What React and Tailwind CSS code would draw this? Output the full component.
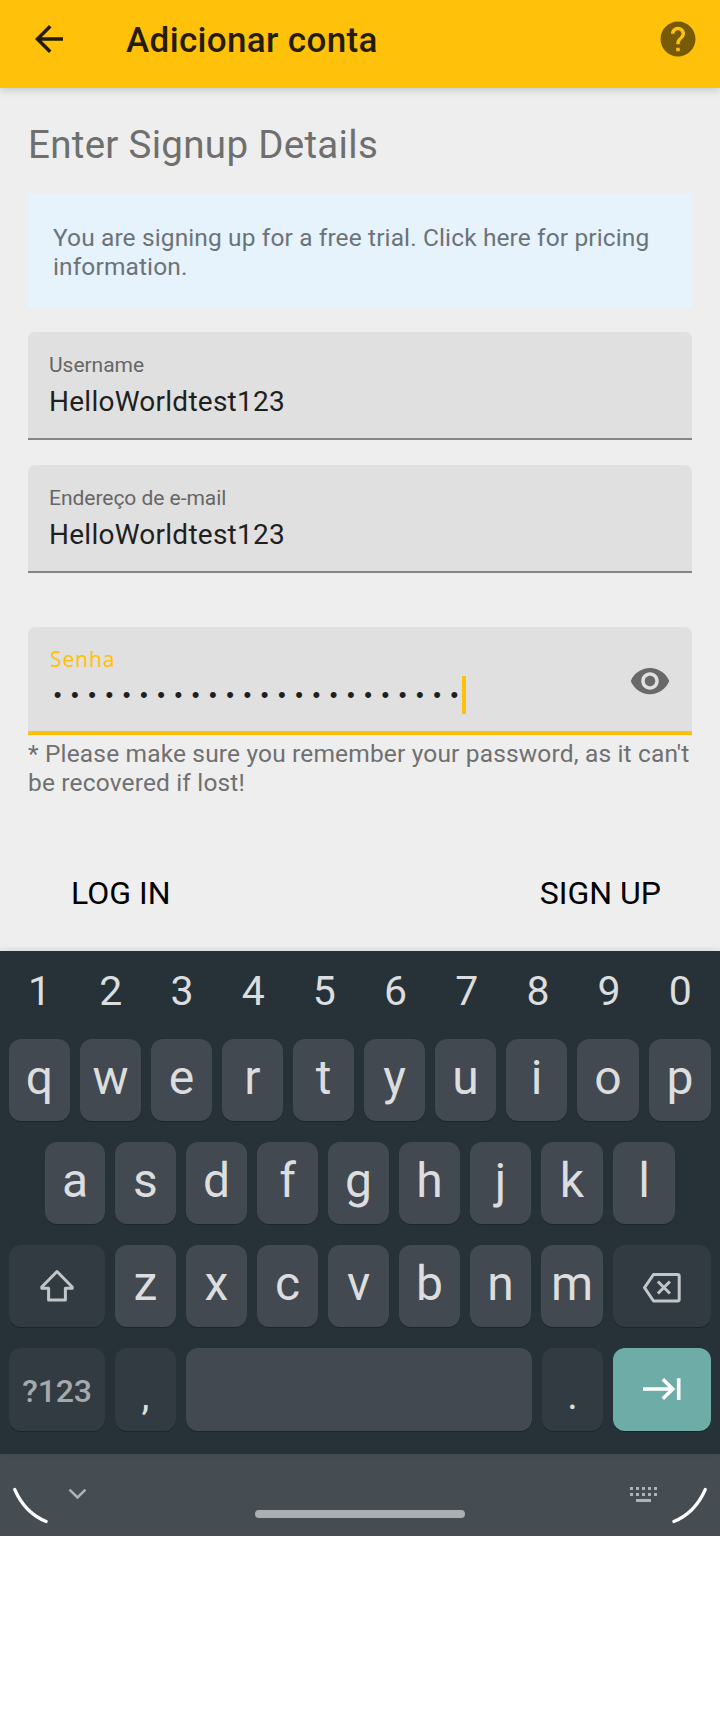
import React from "react";

const KEY = "flex h-full items-start justify-center rounded-[12px] shadow-[0_1px_0_#1c252b]";
const LIGHT = "bg-[#424950] text-[#dcdddf]";
const DARK = "bg-[#313b41] text-[#dcdddf]";

function LetterKey({ children, width = "w-[61px]" }) {
  return (
    <div className={`${KEY} ${LIGHT} ${width} pt-[10px] text-[48px] leading-[58px]`}>
      {children}
    </div>
  );
}

function Field({ label, value }) {
  return (
    <div className="h-[108px] rounded-t-[7px] border-b-2 border-[#848484] bg-[#e0e0e0] px-[21px] pt-[21px]">
      <div className="text-[21px] leading-[24px] tracking-[-0.03px] text-[#666666]">{label}</div>
      <div className="mt-[9px] text-[28px] leading-[32px] tracking-[0.25px] text-[#1f1f1f]">{value}</div>
    </div>
  );
}

function Header() {
  return (
    <header className="relative flex h-[88px] items-start bg-[#ffc109] pl-7 pr-[21px] shadow-[0_2px_8px_rgba(0,0,0,0.16)]">
      <svg className="mt-[18px] h-[42px] w-[42px] shrink-0" viewBox="0 0 24 24" fill="#241d06">
        <path d="M20 11H7.83l5.59-5.59L12 4l-8 8 8 8 1.41-1.41L7.83 13H20v-2z" />
      </svg>
      <h1 className="ml-14 mt-[21px] flex-1 whitespace-nowrap text-[35px] font-medium leading-[40px] tracking-[0.35px] text-[#241d06]">
        Adicionar conta
      </h1>
      <svg className="mt-[18px] h-[42px] w-[42px] shrink-0" viewBox="0 0 24 24" fill="#765a06">
        <path d="M12 2C6.48 2 2 6.48 2 12s4.48 10 10 10 10-4.48 10-10S17.52 2 12 2zm1 17h-2v-2h2v2zm2.07-7.75l-.9.92C13.45 12.9 13 13.5 13 15h-2v-.5c0-1.1.45-2.1 1.17-2.83l1.24-1.26c.37-.36.59-.86.59-1.41 0-1.1-.9-2-2-2s-2 .9-2 2H8c0-2.21 1.79-4 4-4s4 1.79 4 4c0 .88-.36 1.68-.93 2.25z" />
      </svg>
    </header>
  );
}

function PasswordField() {
  return (
    <div className="flex h-[108px] items-start rounded-t-[7px] border-b-4 border-[#ffc109] bg-[#e0e0e0] pl-[21px] pr-[21px]">
      <div className="flex-1 pt-[20px]">
        <div className="pl-px font-['Noto_Sans'] text-[21px] leading-[24px] tracking-[0.85px] text-[#ffc109]">Senha</div>
        <div className="mt-[5px] flex h-[38px] items-start">
          {Array.from({ length: 24 }, (_, i) => (
            <span
              key={i}
              className="w-[17.26px] shrink-0 text-center font-['Liberation_Sans'] text-[22px] leading-[37px] text-[#1f1f1f]"
            >
              •
            </span>
          ))}
          <span className="-ml-[1px] h-[38px] w-1 shrink-0 bg-[#ffc109]" />
        </div>
      </div>
      <svg className="mt-[33px] h-[42px] w-[42px] shrink-0" viewBox="0 0 24 24" fill="#696969">
        <path d="M12 4.5C7 4.5 2.73 7.61 1 12c1.73 4.39 6 7.5 11 7.5s9.27-3.11 11-7.5c-1.73-4.39-6-7.5-11-7.5zM12 17c-2.76 0-5-2.24-5-5s2.24-5 5-5 5 2.24 5 5-2.24 5-5 5zm0-8c-1.66 0-3 1.34-3 3s1.34 3 3 3 3-1.34 3-3-1.34-3-3-3z" />
      </svg>
    </div>
  );
}

function Keyboard() {
  return (
    <section className="relative flex h-[503px] flex-col bg-[#263238] shadow-[0_-1px_6px_rgba(0,0,0,0.1)]">
      <div className="flex h-[88px] pl-1 pt-4 text-[#dcdddf]">
        {["1", "2", "3", "4", "5", "6", "7", "8", "9", "0"].map((n) => (
          <div key={n} className="w-[71.2px] text-center text-[41px] leading-[48px]">{n}</div>
        ))}
      </div>
      <div className="flex h-[82px] justify-between pl-[9px] pr-[9px]">
        {["q", "w", "e", "r", "t", "y", "u", "i"].map((k) => (
          <LetterKey key={k}>{k}</LetterKey>
        ))}
        <LetterKey width="w-[62px]">o</LetterKey>
        <LetterKey width="w-[62px]">p</LetterKey>
      </div>
      <div className="mt-[21px] flex h-[82px] justify-between pl-[45px] pr-[45px]">
        <LetterKey width="w-[60px]">a</LetterKey>
        {["s", "d", "f", "g", "h", "j"].map((k) => (
          <LetterKey key={k}>{k}</LetterKey>
        ))}
        <LetterKey width="w-[62px]">k</LetterKey>
        <LetterKey width="w-[62px]">l</LetterKey>
      </div>
      <div className="mt-[21px] flex h-[82px] justify-between px-[9px]">
        <div className={`${KEY} ${DARK} w-[96px] pt-[21px]`}>
          <svg className="h-10 w-10" viewBox="0 0 40 40" fill="none" stroke="#c3c6c8" strokeWidth="3" strokeLinejoin="round">
            <path d="M20 5.5L4.8 21v1.3h6.8V34h16.8V22.3h6.8V21z" />
          </svg>
        </div>
        {["z", "x", "c", "v", "b", "n"].map((k) => (
          <LetterKey key={k}>{k}</LetterKey>
        ))}
        <LetterKey width="w-[62px]">m</LetterKey>
        <div className={`${KEY} ${DARK} w-[98px] pt-[21px]`}>
          <svg className="h-10 w-10" viewBox="0 0 40 40" fill="none" stroke="#c3c6c8" strokeWidth="3" strokeLinejoin="round">
            <path d="M11.5 8.5H35.5a1.7 1.7 0 0 1 1.7 1.7V33.3a1.7 1.7 0 0 1-1.7 1.7H11.5L2.5 21.7z" />
            <path d="M15.9 15.5l12 12M27.9 15.5l-12 12" />
          </svg>
        </div>
      </div>
      <div className="mt-[21px] flex h-[83px] justify-between px-[9px]">
        <div className={`${KEY} bg-[#313b41] w-[96px] pt-[24px] text-[32px] font-medium leading-[38px] tracking-[-0.2px] text-[#a5a9ac]`}>?123</div>
        <div className={`${KEY} ${DARK} w-[61px] pt-[26px] text-[40px] leading-[44px]`}>,</div>
        <div className={`${KEY} ${LIGHT} w-[346px]`} />
        <div className={`${KEY} ${DARK} w-[61px] pt-[26px] text-[40px] leading-[44px]`}>.</div>
        <div className={`${KEY} w-[98px] bg-[#6eaca8] pt-[21px]`}>
          <svg className="h-10 w-10" viewBox="0 0 40 40" fill="none" stroke="#ffffff" strokeWidth="3.6">
            <path d="M1 20H31M20.8 10.2L30.8 20l-10 9.8M36.7 9.2V31" />
          </svg>
        </div>
      </div>
    </section>
  );
}

function NavBar() {
  return (
    <nav className="flex h-[82px] items-start justify-between bg-[#454d52] px-3">
      <div className="flex">
        <svg className="mt-[32px] h-10 w-10" viewBox="0 0 40 40" fill="none" stroke="#ffffff" strokeWidth="3.2" strokeLinecap="round">
          <path d="M2.7 3.5Q13 27 34.2 35.5" />
        </svg>
        <svg className="ml-4 mt-[32px] h-5 w-5" viewBox="0 0 20 20" fill="none" stroke="#afb3b5" strokeWidth="2.5">
          <path d="M1.5 3.6l8 7.9 8-7.9" />
        </svg>
      </div>
      <div className="ml-[1px] mt-14 h-2 w-[210px] rounded-full bg-[#abafb1]" />
      <div className="flex">
        <svg className="mr-4 mt-[33px] h-[15px] w-[27px]" viewBox="0 0 27 15" fill="#afb3b5">
          {[0, 6, 12, 18, 24].map((x) => (
            <g key={x}>
              <rect x={x} y="0" width="3" height="3" />
              <rect x={x} y="6" width="3" height="3" />
            </g>
          ))}
          <rect x="6" y="12" width="15" height="3" />
        </svg>
        <svg className="ml-[-5px] mt-[32px] h-10 w-10" viewBox="0 0 40 40" fill="none" stroke="#ffffff" strokeWidth="3.2" strokeLinecap="round">
          <path d="M37.3 3.5Q27 27 5.8 35.5" />
        </svg>
      </div>
    </nav>
  );
}

export default function App() {
  return (
    <div className="min-h-[1712px] w-[720px] overflow-hidden bg-white font-['Roboto',sans-serif]">
      <Header />
      <main className="h-[863px] bg-[#eeeeee] px-7 pt-[35px]">
        <h2 className="text-[38.5px] leading-[44px] tracking-[0.3px] text-[#6f6f6f]">Enter Signup Details</h2>
        <div className="mt-[27px] h-[113px] whitespace-nowrap bg-[#e6f3fd] px-[25px] pt-[29px] text-[24.5px] leading-[29px] tracking-[0.12px] text-[#6c7378]">
          You are signing up for a free trial. Click here for pricing
          <br />
          information.
        </div>
        <div className="mt-[25px]">
          <Field label="Username" value="HelloWorldtest123" />
        </div>
        <div className="mt-[25px]">
          <Field label="Endereço de e-mail" value="HelloWorldtest123" />
        </div>
        <div className="mt-[54px]">
          <PasswordField />
        </div>
        <p className="mt-1 whitespace-nowrap text-[24.5px] leading-[29px] tracking-[0.16px] text-[#707070]">
          * Please make sure you remember your password, as it can't
          <br />
          be recovered if lost!
        </p>
        <div className="mt-[77px] flex justify-between pl-[43px] pr-[31px] text-[32px] leading-[38px] text-black">
          <span>LOG IN</span>
          <span>SIGN UP</span>
        </div>
      </main>
      <Keyboard />
      <NavBar />
    </div>
  );
}
